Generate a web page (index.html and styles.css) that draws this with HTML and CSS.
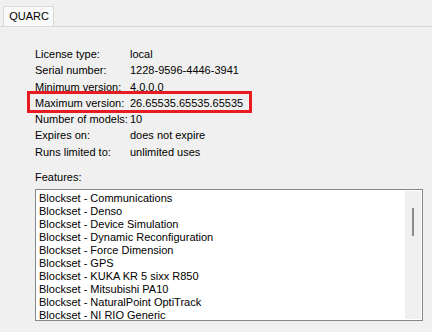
FILE: index.html
```html
<!DOCTYPE html>
<html lang="en">
<head>
    <meta charset="UTF-8">
    <title>QUARC License</title>
    <link rel="stylesheet" href="styles.css">
</head>
<body>
    <div class="tab-strip">
        <div class="tab">QUARC</div>
    </div>
    <div class="panel">
        <div class="info">
            <div class="row"><span class="label">License type:</span><span class="value">local</span></div>
            <div class="row"><span class="label">Serial number:</span><span class="value">1228-9596-4446-3941</span></div>
            <div class="row"><span class="label">Minimum version:</span><span class="value">4.0.0.0</span></div>
            <div class="row marked"><span class="label">Maximum version:</span><span class="value">26.65535.65535.65535</span></div>
            <div class="row"><span class="label">Number of models:</span><span class="value">10</span></div>
            <div class="row"><span class="label">Expires on:</span><span class="value">does not expire</span></div>
            <div class="row"><span class="label">Runs limited to:</span><span class="value">unlimited uses</span></div>
        </div>
        <p class="features-label">Features:</p>
        <div class="listbox">
            <ul class="list-items">
                <li>Blockset - Communications</li>
                <li>Blockset - Denso</li>
                <li>Blockset - Device Simulation</li>
                <li>Blockset - Dynamic Reconfiguration</li>
                <li>Blockset - Force Dimension</li>
                <li>Blockset - GPS</li>
                <li>Blockset - KUKA KR 5 sixx R850</li>
                <li>Blockset - Mitsubishi PA10</li>
                <li>Blockset - NaturalPoint OptiTrack</li>
                <li>Blockset - NI RIO Generic</li>
            </ul>
            <div class="scrollbar">
                <div class="thumb"></div>
            </div>
        </div>
    </div>
</body>
</html>
```

FILE: styles.css
```css
body {
    margin: 0;
    background-color: #f0f0f0;
    font-family: "Liberation Sans", Arial, sans-serif;
    font-size: 11px;
    color: #000;
}

/* tab strip ======================================================= */

.tab-strip {
    height: 20px;
    padding: 6px 0 0 3px;
    border-bottom: 1px solid #d9d9d9;
    display: flex;
}

.tab {
    width: 51px;
    height: 20px;
    line-height: 18px;
    padding-left: 1px;
    text-align: center;
    background-color: #f9f9f9;
    border: 1px solid #d9d9d9;
    border-bottom: none;
    box-sizing: border-box;
    position: relative;
    z-index: 1;
}

/* panel =========================================================== */

.panel {
    padding: 19px 9px 0 35px;
}

.info {
    display: flex;
    flex-direction: column;
}

.row {
    display: flex;
    height: 16.3px;
    line-height: 16.3px;
}

.label {
    width: 95px;
}

.row.marked {
    position: relative;
}

/* red annotation box drawn over the row */
.row.marked::after {
    content: "";
    position: absolute;
    left: -8px;
    top: -4px;
    width: 225px;
    height: 22px;
    border: 3px solid #e81a22;
    box-sizing: border-box;
}

.features-label {
    margin: 11px 0 0;
    line-height: 13px;
}

.listbox {
    margin-top: 5px;
    width: 388px;
    height: 132px;
    box-sizing: border-box;
    border: 1px solid #828790;
    background-color: #fff;
    display: flex;
    overflow: hidden;
}

.list-items {
    flex: 1;
    list-style-type: none;
    margin: 0;
    padding: 2px 0 0 3px;
}

.list-items li {
    height: 13px;
    line-height: 13px;
    white-space: nowrap;
}

.scrollbar {
    width: 16px;
    margin: 1px 1px 1px 0;
    background-color: #f0f0f0;
    padding-top: 17px;
    box-sizing: border-box;
}

.thumb {
    width: 2px;
    height: 28px;
    margin-left: 7px;
    background-color: #8b8b8b;
}
```
